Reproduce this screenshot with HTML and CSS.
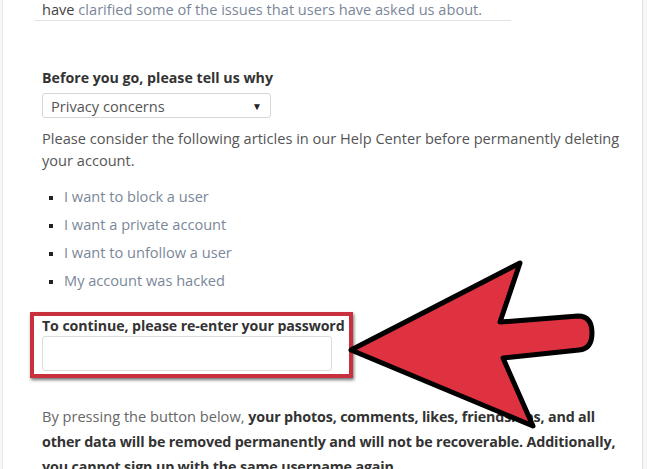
FILE: index.html
```html
<!DOCTYPE html>
<html lang="en">
<head>
    <meta charset="UTF-8">
    <meta name="viewport" content="width=device-width, initial-scale=1.0">
    <title>Delete Your Account</title>
    <link rel="stylesheet" href="styles.css">
</head>
<body>
    <div class="page">
        <p class="intro">have <a href="#">clarified some of the issues that users have asked us about.</a></p>

        <label class="field-label">Before you go, please tell us why</label>
        <div class="select">
            <span>Privacy concerns</span>
            <span class="caret">&#9660;</span>
        </div>

        <p class="text">Please consider the following articles in our Help Center before permanently deleting your account.</p>

        <ul class="links">
            <li><a href="#">I want to block a user</a></li>
            <li><a href="#">I want a private account</a></li>
            <li><a href="#">I want to unfollow a user</a></li>
            <li><a href="#">My account was hacked</a></li>
        </ul>

        <div class="confirm">
            <label class="field-label">To continue, please re-enter your password</label>
            <input type="password" class="password">
        </div>

        <p class="text warning">By pressing the button below, <b>your photos, comments, likes, friendships, and all other data will be removed permanently and will not be recoverable. Additionally, you cannot sign up with the same username again.</b></p>

        <svg class="arrow" width="260" height="190" viewBox="0 0 260 190">
            <path d="M8 97 L177 10 L157 69 L235 63 Q249 63 249 80 Q249 96 236 97 L160 105 L190 173 Z"
                  fill="#de3241" stroke="#000" stroke-width="5" stroke-linejoin="round"/>
        </svg>
    </div>
</body>
</html>
```

FILE: styles.css
```css
body {
    margin: 0;
    background: #f7f7f7;
    font-family: "Open Sans", Arial, sans-serif;
    color: #555;
}
.page {
    position: relative;
    width: 641px;
    height: 469px;
    margin-left: 2px;
    background: white;
    border-left: 1px solid #e8e8e8;
    border-right: 1px solid #e2e2e2;
    padding: 0 0 0 39px;
    box-sizing: border-box;
    overflow: hidden;
}
a {
    color: #7b8799;
    text-decoration: none;
}
.intro {
    width: 469px;
    margin: 0 0 0 -8px;
    padding: 0 0 2px 8px;
    font-size: 14.6px;
    line-height: 18px;
    color: #444;
    border-bottom: 1px solid #e3e3e3;
}
.field-label {
    display: block;
    font-weight: bold;
    font-size: 14.2px;
    color: #333;
    white-space: nowrap;
}
.page > .field-label {
    margin-top: 47px;
}
.select {
    display: flex;
    justify-content: space-between;
    align-items: center;
    width: 229px;
    height: 25px;
    margin-top: 6px;
    padding: 0 8px;
    border: 1px solid #d6d6d6;
    border-radius: 3px;
    box-sizing: border-box;
    font-size: 14.6px;
    color: #555;
}
.caret {
    font-size: 10px;
    color: #222;
}
.text {
    margin: 9px 0 0 0;
    font-size: 14.6px;
    line-height: 22px;
    width: 585px;
}
.links {
    margin: 11px 0 0 0;
    padding-left: 22px;
    list-style: square;
    font-size: 14.6px;
    line-height: 28px;
}
.links li::marker {
    color: #222;
    font-size: 11px;
}
.confirm {
    width: 323px;
    margin: 18px 0 0 -12px;
    padding: 0 2px 3px 8px;
    border: 4px solid #c9303e;
    box-shadow: 1px 2px 3px rgba(0, 0, 0, 0.55);
    box-sizing: border-box;
}
.confirm .field-label {
    letter-spacing: -0.1px;
    line-height: 19px;
}
.password {
    display: block;
    width: 290px;
    height: 35px;
    margin-top: 1px;
    border: 1px solid #dcdcdc;
    border-radius: 3px;
    box-sizing: border-box;
}
.warning {
    margin-top: 26px;
    line-height: 24px;
    width: 578px;
    color: #666;
}
.warning b {
    color: #333;
    font-size: 14.3px;
    letter-spacing: -0.15px;
}
.arrow {
    position: absolute;
    left: 340px;
    top: 253px;
}
```
